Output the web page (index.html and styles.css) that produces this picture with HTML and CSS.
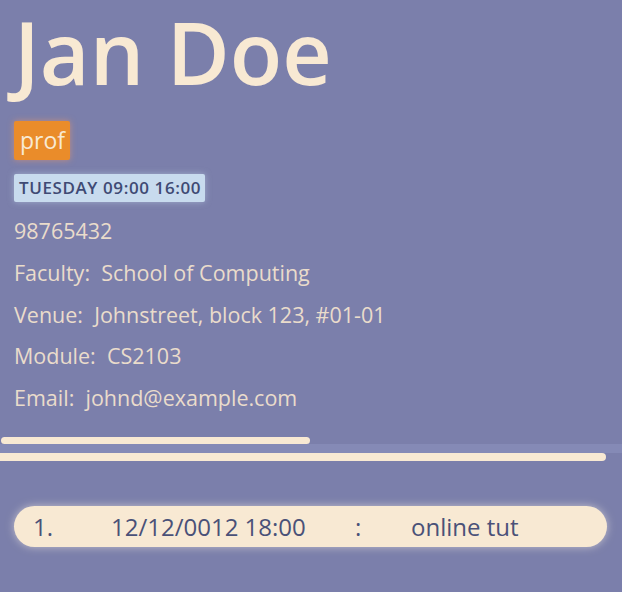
FILE: index.html
```html
<!DOCTYPE html>
<html>
<head>
<meta charset="utf-8">
<link rel="stylesheet" href="styles.css">
</head>
<body>
<div class="page">
  <section class="profile">
    <h1 class="name">Jan Doe</h1>
    <div class="tags"><span class="tag-prof">prof</span></div>
    <div class="sched"><span class="tag-sched">TUESDAY 09:00 16:00</span></div>
    <div class="details">
      <div class="detail">98765432</div>
      <div class="detail">Faculty:&nbsp; School of Computing</div>
      <div class="detail">Venue:&nbsp; Johnstreet, block 123, #01-01</div>
      <div class="detail">Module:&nbsp; CS2103</div>
      <div class="detail">Email:&nbsp; johnd@example.com</div>
    </div>
  </section>
  <div class="scroll-a"><div class="thumb-a"></div></div>
  <div class="band"></div>
  <div class="scroll-b"><div class="thumb-b"></div></div>
  <section class="list">
    <div class="card">
      <span class="idx">1.</span>
      <span class="when">12/12/0012 18:00</span>
      <span class="colon">:</span>
      <span class="what">online tut</span>
    </div>
  </section>
</div>
</body>
</html>
```
FILE: styles.css
```css
html, body {
  margin: 0;
  padding: 0;
  background: #7b7fab;
  width: 622px;
  height: 592px;
  overflow: hidden;
  font-family: "Open Sans", "Noto Sans", sans-serif;
}
.page {
  display: flex;
  flex-direction: column;
}
.profile {
  padding: 0 0 0 14px;
  display: flex;
  flex-direction: column;
}
.name {
  margin: 0;
  font-size: 86px;
  font-weight: 600;
  line-height: 103px;
  color: #f8e9d3;
}
.tags {
  display: flex;
  margin-top: 18px;
}
.tag-prof {
  background: #ea8c2a;
  color: #f8e9d3;
  font-size: 23px;
  line-height: 39px;
  height: 39px;
  padding: 0 5px 0 6px;
  border-radius: 2px;
  box-shadow: 0 0 6px rgba(240, 150, 100, 0.6);
}
.sched {
  display: flex;
  margin-top: 14px;
}
.tag-sched {
  background: #c8dbee;
  color: #3f4a74;
  font-size: 17px;
  font-weight: 600;
  letter-spacing: 0.6px;
  line-height: 28px;
  height: 28px;
  padding: 0 4px 0 5px;
  border-radius: 2px;
  box-shadow: 0 0 6px rgba(200, 220, 240, 0.5);
}
.details {
  margin-top: 8px;
  display: flex;
  flex-direction: column;
}
.detail {
  color: #eadccb;
  font-size: 21.5px;
  line-height: 41.8px;
}
.scroll-a {
  height: 7px;
  margin-top: 18px;
  padding-left: 1px;
}
.thumb-a {
  width: 309px;
  height: 7px;
  background: #f8e9d3;
  border-radius: 4px;
}
.band {
  height: 9px;
  background: #858ab6;
}
.scroll-b {
  height: 8px;
}
.thumb-b {
  width: 606px;
  height: 8px;
  background: #f8e9d3;
  border-radius: 0 4px 4px 0;
}
.list {
  padding: 45px 15px 0 14px;
}
.card {
  height: 41px;
  background: #f8e9d3;
  border-radius: 21px;
  box-shadow: 0 0 8px rgba(255, 245, 230, 0.55);
  display: flex;
  align-items: center;
  color: #4a5178;
  font-size: 24px;
}
.idx { margin-left: 19px; width: 78px; }
.when { width: 244px; }
.colon { width: 56px; }
```
